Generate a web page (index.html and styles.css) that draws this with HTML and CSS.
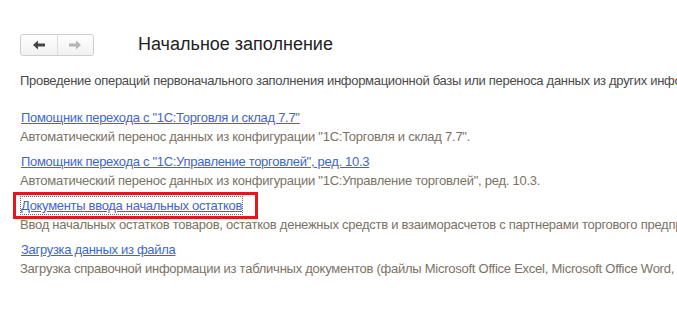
FILE: index.html
```html
<!DOCTYPE html>
<html lang="ru">
<head>
<meta charset="utf-8">
<link rel="stylesheet" href="styles.css">
</head>
<body>
<div class="page">
  <div class="header">
    <div class="nav">
      <span class="nav-btn back"><svg width="12" height="10" viewBox="0 0 12 10"><path d="M0 5 L5 0.5 L5 3.5 L12 3.5 L12 6.5 L5 6.5 L5 9.5 Z" fill="#444"/></svg></span>
      <span class="nav-btn fwd"><svg width="12" height="10" viewBox="0 0 12 10"><path d="M12 5 L7 0.5 L7 3.5 L0 3.5 L0 6.5 L7 6.5 L7 9.5 Z" fill="#b5b5b5"/></svg></span>
    </div>
    <h1 class="title">Начальное заполнение</h1>
  </div>
  <p class="intro">Проведение операций первоначального заполнения информационной базы или переноса данных из других информационных систем.</p>
  <div class="items">
    <div class="item">
      <a class="link" href="#">Помощник перехода с "1С:Торговля и склад 7.7"</a>
      <div class="desc">Автоматический перенос данных из конфигурации "1С:Торговля и склад 7.7".</div>
    </div>
    <div class="item">
      <a class="link" href="#">Помощник перехода с "1С:Управление торговлей", ред. 10.3</a>
      <div class="desc">Автоматический перенос данных из конфигурации "1С:Управление торговлей", ред. 10.3.</div>
    </div>
    <div class="item">
      <span class="highlight"><a class="link focused" href="#">Документы ввода начальных остатков</a></span>
      <div class="desc">Ввод начальных остатков товаров, остатков денежных средств и взаиморасчетов с партнерами торгового предприятия.</div>
    </div>
    <div class="item">
      <a class="link" href="#">Загрузка данных из файла</a>
      <div class="desc">Загрузка справочной информации из табличных документов (файлы Microsoft Office Excel, Microsoft Office Word, OpenOffice).</div>
    </div>
  </div>
</div>
</body>
</html>
```
FILE: styles.css
```css
html, body {
  margin: 0;
  padding: 0;
  background: #fff;
  overflow: hidden;
}
body {
  font-family: "Liberation Sans", Arial, sans-serif;
  width: 677px;
  height: 316px;
}
.page {
  padding: 33px 0 0 20px;
  white-space: nowrap;
}
.header {
  display: flex;
  align-items: center;
  height: 23px;
}
.nav {
  display: flex;
  width: 74px;
  height: 22px;
  border: 1px solid #cfcfcf;
  border-radius: 3px;
  background: linear-gradient(#ffffff, #f1f1f1);
  box-sizing: border-box;
}
.nav-btn {
  flex: 1;
  display: flex;
  align-items: center;
  justify-content: center;
}
.nav-btn.back {
  border-right: 1px solid #dcdcdc;
}
.title {
  margin: 0 0 0 44px;
  font-weight: normal;
  font-size: 18px;
  color: #222;
}
.intro {
  margin: 17px 0 0 0;
  font-size: 13px;
  color: #4a4a4a;
  letter-spacing: -0.3px;
}
.items {
  margin-top: 20px;
  display: flex;
  flex-direction: column;
  gap: 6px;
}
.item {
  display: grid;
  grid-template-rows: 19px 19px;
  justify-items: start;
}
.link {
  font-size: 13px;
  color: #3f67c6;
  text-decoration: underline;
  line-height: 19px;
  letter-spacing: -0.3px;
  margin-left: 1px;
}
.desc {
  font-size: 13px;
  color: #7c7264;
  line-height: 19px;
  letter-spacing: -0.25px;
}
.highlight {
  display: inline-block;
  height: 19px;
  outline: 3px solid #e8151d;
  outline-offset: 1px;
  margin-left: -3px;
  padding: 0 12px 0 3px;
}
.link.focused {
  display: inline-block;
  line-height: 17px;
  margin-top: 1px;
  outline: 1px dotted #6d6d6d;
}
```
